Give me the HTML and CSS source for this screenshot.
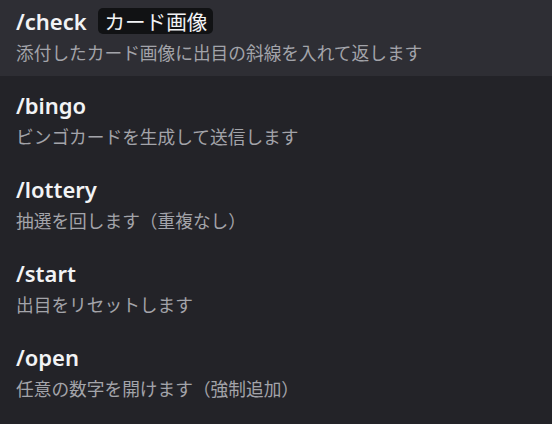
FILE: index.html
```html
<!DOCTYPE html>
<html lang="ja">

<head>
    <meta charset="UTF-8">
    <meta name="viewport" content="width=device-width, initial-scale=1.0">
    <title>コマンド一覧</title>
    <link rel="stylesheet" href="styles.css">
</head>

<body>

    <div class="command-list">
        <div class="command selected">
            <div class="command-name">/check <span class="option">カード画像</span></div>
            <div class="command-desc">添付したカード画像に出目の斜線を入れて返します</div>
        </div>
        <div class="command">
            <div class="command-name">/bingo</div>
            <div class="command-desc">ビンゴカードを生成して送信します</div>
        </div>
        <div class="command">
            <div class="command-name">/lottery</div>
            <div class="command-desc">抽選を回します（重複なし）</div>
        </div>
        <div class="command">
            <div class="command-name">/start</div>
            <div class="command-desc">出目をリセットします</div>
        </div>
        <div class="command">
            <div class="command-name">/open</div>
            <div class="command-desc">任意の数字を開けます（強制追加）</div>
        </div>
    </div>

</body>

</html>
```

FILE: styles.css
```css
body {
    margin: 0;
    background-color: #232328;
    font-family: "Noto Sans", "Noto Sans CJK JP", sans-serif;
    overflow: hidden;
}

.command-list {
    margin-top: -8px;
}

.command {
    height: 84px;
    box-sizing: border-box;
    padding: 15px 16px 0 16px;
}

.selected {
    background-color: #2e2e34;
}

.command-name {
    display: flex;
    align-items: center;
    height: 28px;
    margin-bottom: 5px;
    color: #f2f3f5;
    font-size: 22px;
    font-weight: 600;
    white-space: pre;
}

.option {
    margin-left: 6px;
    padding: 0 6px;
    height: 26px;
    line-height: 26px;
    border-radius: 5px;
    background-color: #111214;
    color: #f2f3f5;
    font-family: "Noto Sans CJK JP", sans-serif;
    font-size: 20.6px;
    font-weight: 400;
}

.command-desc {
    line-height: 24px;
    color: #a3a4aa;
    font-family: "Noto Sans CJK JP", sans-serif;
    font-size: 17.7px;
}
```
